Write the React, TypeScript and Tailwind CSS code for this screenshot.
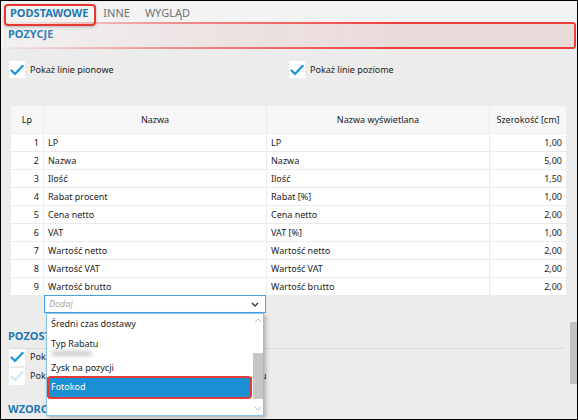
import { ReactNode } from 'react';

interface Row {
  lp: number;
  name: string;
  display: string;
  width: string;
}

const rows: Row[] = [
  { lp: 1, name: 'LP', display: 'LP', width: '1,00' },
  { lp: 2, name: 'Nazwa', display: 'Nazwa', width: '5,00' },
  { lp: 3, name: 'Ilość', display: 'Ilość', width: '1,50' },
  { lp: 4, name: 'Rabat procent', display: 'Rabat [%]', width: '1,00' },
  { lp: 5, name: 'Cena netto', display: 'Cena netto', width: '2,00' },
  { lp: 6, name: 'VAT', display: 'VAT [%]', width: '1,00' },
  { lp: 7, name: 'Wartość netto', display: 'Wartość netto', width: '2,00' },
  { lp: 8, name: 'Wartość VAT', display: 'Wartość VAT', width: '2,00' },
  { lp: 9, name: 'Wartość brutto', display: 'Wartość brutto', width: '2,00' },
];

function Check({ faded }: { faded?: boolean }) {
  return (
    <div className="w-[16px] h-[17px] bg-white flex items-center justify-center shrink-0">
      <svg width="14" height="12" viewBox="0 0 14 12">
        <path
          d="M1.5 6.5 L5 10 L12.5 2"
          fill="none"
          stroke={faded ? '#d3e8f5' : '#1e9ad6'}
          strokeWidth="2.4"
          strokeLinecap="round"
          strokeLinejoin="round"
        />
      </svg>
    </div>
  );
}

function CheckRow({ children, faded }: { children: ReactNode; faded?: boolean }) {
  return (
    <div className="flex items-center gap-[5px] whitespace-nowrap">
      <Check faded={faded} />
      <span className="text-[9px] text-[#222]">{children}</span>
    </div>
  );
}

function SectionTitle({ children }: { children: ReactNode }) {
  return <div className="text-[11px] font-bold text-[#1f78b4] whitespace-nowrap">{children}</div>;
}

export default function App() {
  return (
    <div
      className="relative w-[578px] h-[420px] overflow-hidden border border-black bg-[#ececec]"
      style={{ fontFamily: '"Noto Sans", "Open Sans", sans-serif' }}
    >
      {/* top: tabs + section header */}
      <div className="bg-[#f3f3f3] h-[47px]">
        <div className="flex items-center h-[24px] pl-[9px] gap-[15px] text-[11px]">
          <span className="font-bold text-[#1f78b4]">PODSTAWOWE</span>
          <span className="text-[#707070]">INNE</span>
          <span className="text-[#707070]">WYGLĄD</span>
        </div>
        <div className="pl-[7px] pt-[1px]">
          <SectionTitle>POZYCJE</SectionTitle>
        </div>
      </div>

      {/* checkboxes */}
      <div className="flex items-start pl-[8px] pt-[13px] h-[58px]">
        <div className="w-[280px]">
          <CheckRow>Pokaż linie pionowe</CheckRow>
        </div>
        <CheckRow>Pokaż linie poziome</CheckRow>
      </div>

      {/* table */}
      <div className="ml-[10px] grid grid-cols-[32px_222px_222px_76px] gap-x-px gap-y-px text-[9px] text-[#222]">
        <div className="h-[27px] bg-[#f7f7f7] flex items-center justify-center">Lp</div>
        <div className="h-[27px] bg-[#f7f7f7] flex items-center justify-center">Nazwa</div>
        <div className="h-[27px] bg-[#f7f7f7] flex items-center justify-center">Nazwa wyświetlana</div>
        <div className="h-[27px] bg-[#f7f7f7] flex items-center justify-center">Szerokość [cm]</div>
        {rows.map((r) => (
          <div key={r.lp} className="contents">
            <div className="h-[17px] bg-white flex items-center justify-end pr-[4px]">{r.lp}</div>
            <div className="h-[17px] bg-white flex items-center pl-[4px]">{r.name}</div>
            <div className="h-[17px] bg-white flex items-center pl-[4px]">{r.display}</div>
            <div className="h-[17px] bg-white flex items-center justify-end pr-[4px]">{r.width}</div>
          </div>
        ))}
      </div>

      {/* add combo */}
      <div className="ml-[43px] w-[222px] h-[18px] bg-white border border-[#4aa3df] flex items-center justify-between pl-[4px] pr-[6px]">
        <span className="text-[9px] italic text-[#a8a8a8]">Dodaj</span>
        <svg width="8" height="5" viewBox="0 0 8 5">
          <path d="M1 1 L4 4 L7 1" fill="none" stroke="#333" strokeWidth="1.3" />
        </svg>
      </div>

      {/* other section */}
      <div className="pl-[7px] pt-[15px]">
        <SectionTitle>POZOSTAŁE</SectionTitle>
      </div>
      <div className="ml-[8px] mr-[12px] mt-[3px] h-px bg-[#dcdcdc]" />
      <div className="pl-[8px] flex flex-col gap-[2px]">
        <CheckRow>Pokaż kod kreskowy pozycji na wydruku</CheckRow>
        <CheckRow faded>Pokaż zdjęcia produktów obok nazwy pozycji w wydruku</CheckRow>
      </div>
      <div className="pl-[7px] pt-[16px]">
        <SectionTitle>WZORCE WYDRUKU</SectionTitle>
      </div>

      {/* page scrollbar */}
      <div className="absolute right-0 top-[321px] w-[7px] h-[62px] bg-[#c2c2c2]" />

      {/* annotation: section band */}
      <div className="absolute left-[3px] right-[1px] top-[21px] h-[27px] rounded-[3px] border-2 border-[#ee3b3b] bg-[#e6d0d0]/70 shadow-[0_3px_4px_rgba(0,0,0,0.15)] [mask-image:linear-gradient(to_right,rgba(0,0,0,0.05),rgba(0,0,0,0.55)_30%,black_70%)]" />

      {/* annotation: active tab */}
      <div className="absolute left-[3px] top-[3px] w-[92px] h-[22px] rounded-[4px] border-2 border-[#e53935] shadow-[0_1px_3px_rgba(0,0,0,0.25)]" />

      {/* dropdown list */}
      <div className="absolute left-[45px] top-[312px] w-[218px] h-[103px] bg-white border border-[#8cc4e8] shadow-[2px_2px_4px_rgba(0,0,0,0.25)] flex text-[9px] text-[#222]">
        <div className="flex-1 relative">
          <div className="h-[20px] flex items-center pl-[4px]">Średni czas dostawy</div>
          <div className="h-[20px] flex items-center pl-[4px]">Typ Rabatu</div>
          <div className="h-[4px]" />
          <div className="h-[19px] flex items-center pl-[4px]">Zysk na pozycji</div>
          <div className="h-[20px] flex items-center pl-[4px] bg-[#1a8fd3] text-white">Fotokod</div>
          <div className="absolute left-[5px] top-[37px] w-[40px] h-[5px] rounded-full bg-[#c8c8c8] blur-[2px]" />
          <div className="absolute left-0 right-0 top-[62px] h-[23px] rounded-[4px] border-2 border-[#e53935]" />
        </div>
        <div className="w-[11px] flex flex-col items-center justify-between py-[4px]">
          <svg width="8" height="5" viewBox="0 0 8 5">
            <path d="M1 4 L4 1 L7 4" fill="none" stroke="#bdbdbd" strokeWidth="1" />
          </svg>
          <div className="w-[10px] h-[46px] bg-[#c6c6c6] mt-[22px]" />
          <svg width="8" height="5" viewBox="0 0 8 5">
            <path d="M1 1 L4 4 L7 1" fill="none" stroke="#bdbdbd" strokeWidth="1" />
          </svg>
        </div>
      </div>
    </div>
  );
}
